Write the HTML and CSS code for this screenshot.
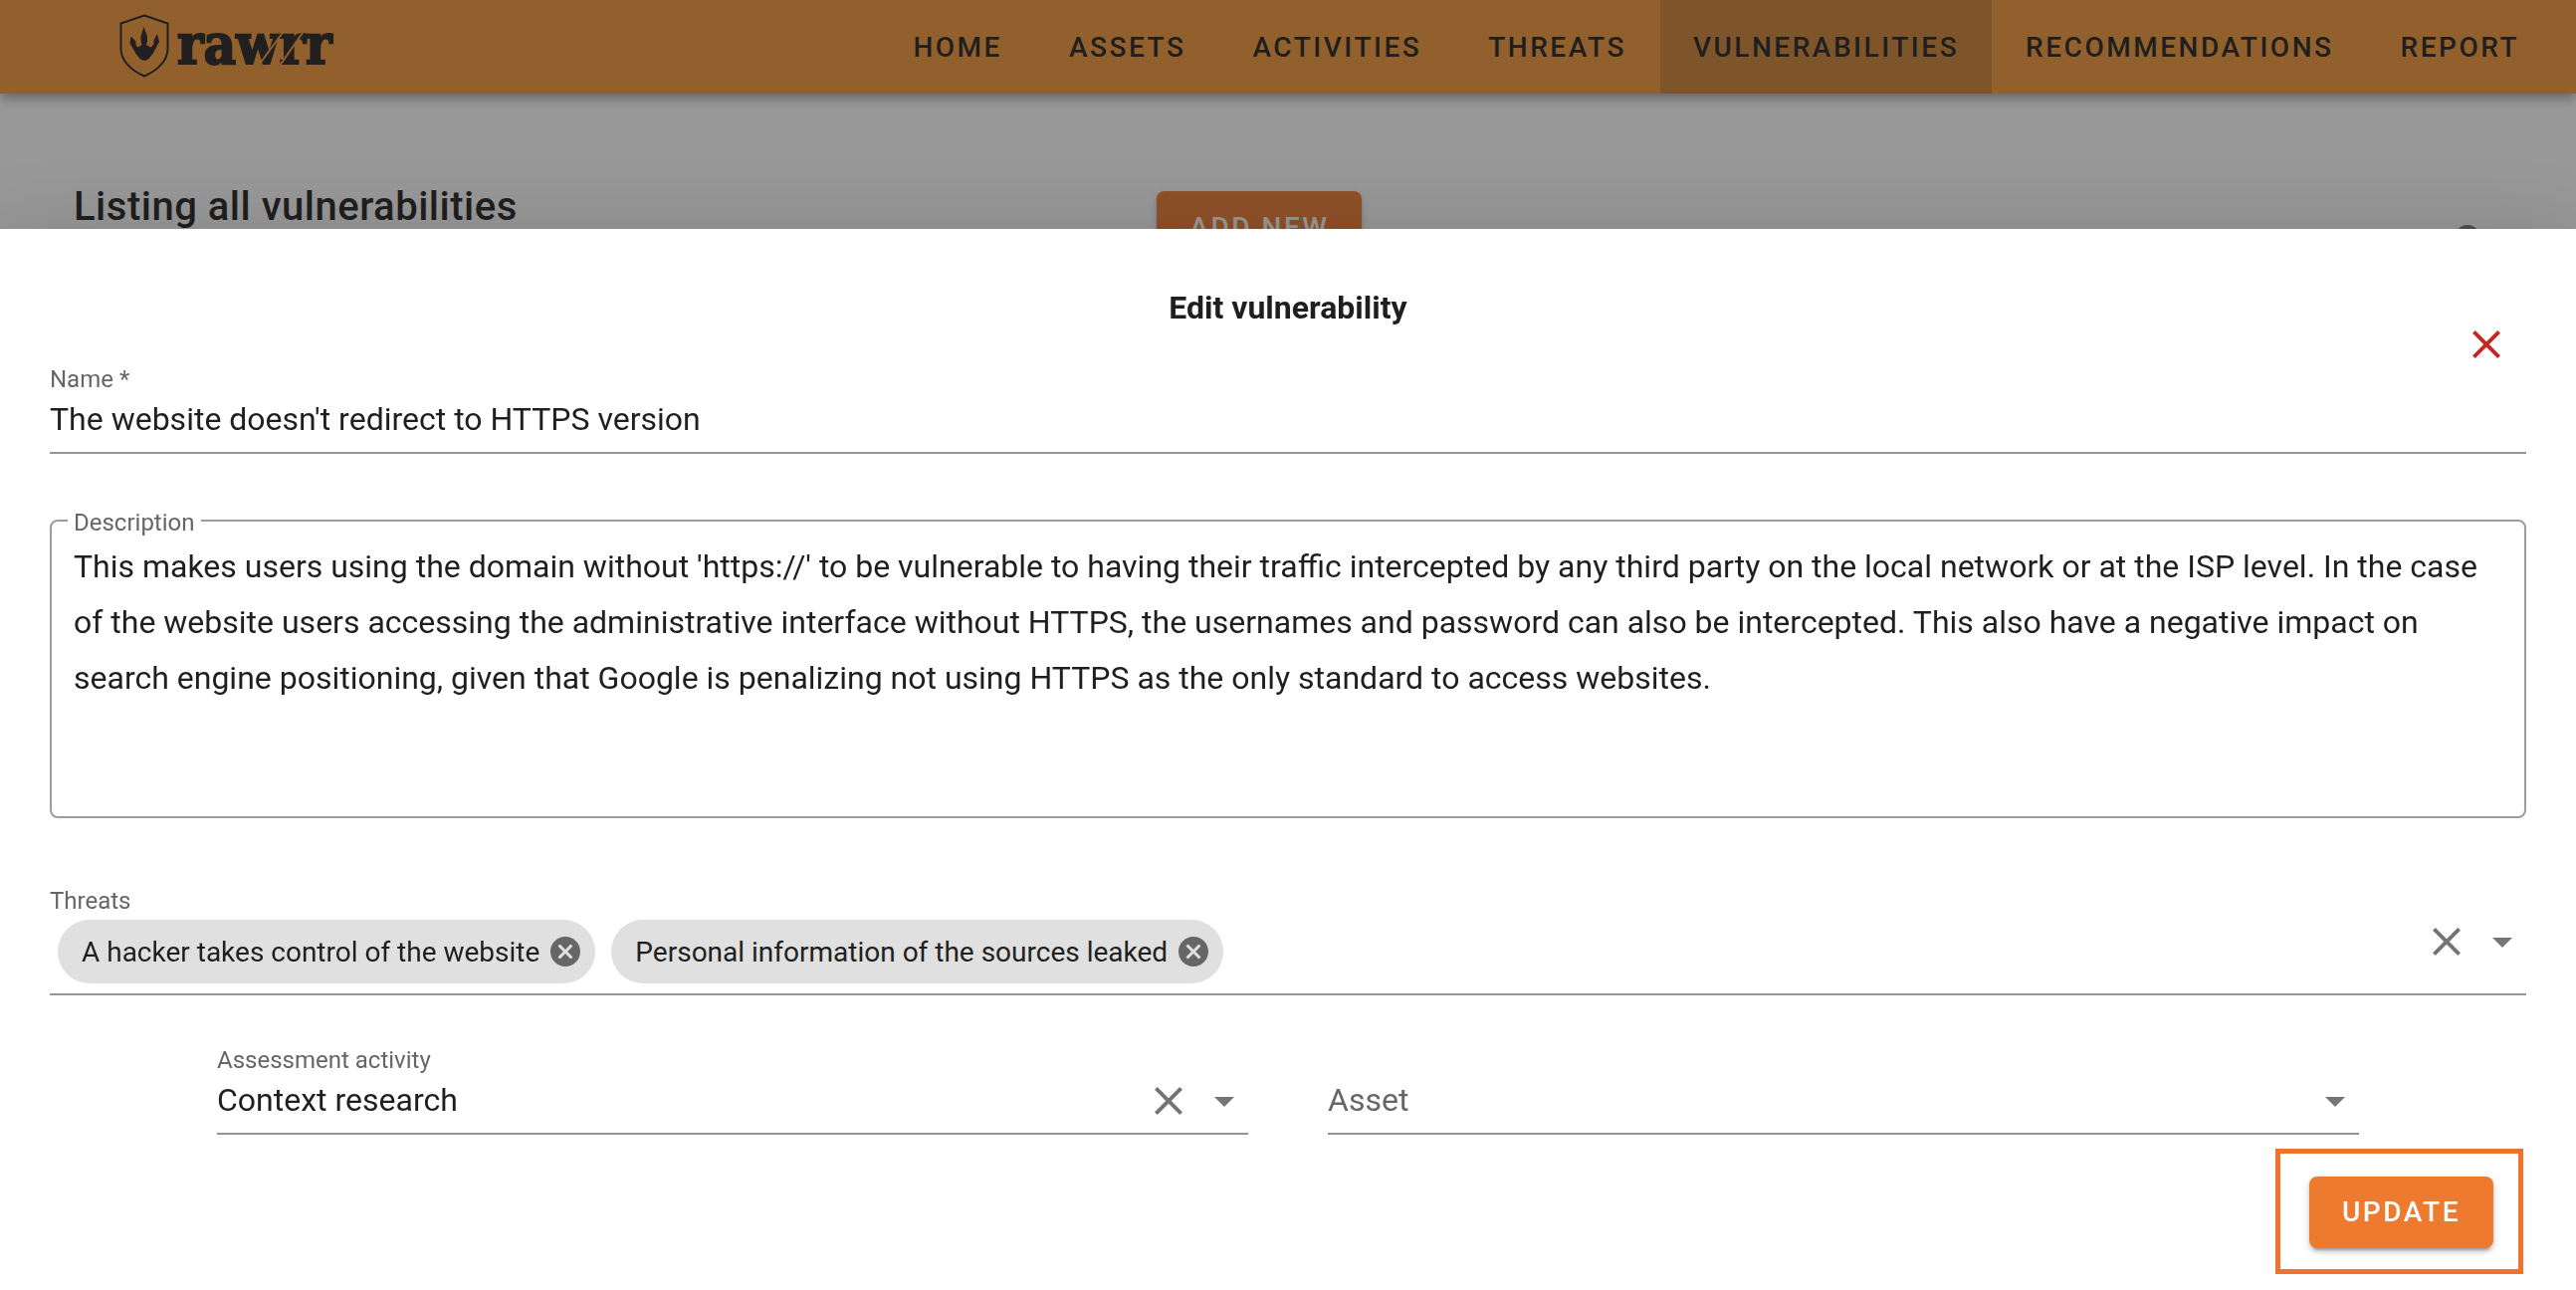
FILE: index.html
```html
<!DOCTYPE html>
<html lang="en">
<head>
<meta charset="utf-8">
<title>rawrr - Vulnerabilities</title>
<link rel="stylesheet" href="styles.css">
</head>
<body>
<header class="topbar">
  <a class="brand" href="#" aria-label="rawrr home">
    <svg class="brand-logo" width="216" height="68" viewBox="0 0 216 68">
      <path class="shield" d="M25 3.500L48.500 11.500V37C48.500 49 38 59 25 64.500C12 59 1.500 49 1.500 37V11.500Z"/>
      <path class="ink" d="M24.500 15L28 24.500V29.500L27 33.500L32 35.500L34.500 32V28.500L38 22L40 30L33.500 42L29 47.500Q25 50 21 47.500L16.500 42L10.500 31.500L11.500 24.500L16.500 29.500V33L18.500 35.500L22.500 33L21.500 29V24.500Z"/>
      <text class="ink wordmark" x="58" y="52">rawrr</text>
      <path class="cut" d="M141 52L166 18M161 54L186 18"/>
    </svg>
  </a>
  <nav class="nav">
    <a href="#">HOME</a>
    <a href="#">ASSETS</a>
    <a href="#">ACTIVITIES</a>
    <a href="#">THREATS</a>
    <a class="active" href="#" aria-current="page">VULNERABILITIES</a>
    <a href="#">RECOMMENDATIONS</a>
    <a href="#">REPORT</a>
  </nav>
</header>

<main class="listing">
  <h1>Listing all vulnerabilities</h1>
  <div><button class="btn" type="button">ADD NEW</button></div>
  <svg class="search" viewBox="0 0 24 24"><path d="M9.500 3A6.500 6.500 0 0 1 16 9.500C16 11.110 15.410 12.590 14.440 13.730L14.710 14H15.500L20.500 19L19 20.500L14 15.500V14.710L13.730 14.440C12.590 15.410 11.110 16 9.500 16A6.500 6.500 0 0 1 9.500 3M9.500 5C7 5 5 7 5 9.500C5 12 7 14 9.500 14C12 14 14 12 14 9.500C14 7 12 5 9.500 5Z"/></svg>
</main>

<div class="scrim"></div>

<section class="sheet" role="dialog" aria-labelledby="sheet-title">
  <h2 id="sheet-title">Edit vulnerability</h2>
  <button class="icon-btn close" type="button" aria-label="Close"><svg viewBox="0 0 24 24"><path d="M19 6.410L17.590 5L12 10.590L6.410 5L5 6.410L10.590 12L5 17.590L6.410 19L12 13.410L17.590 19L19 17.590L13.410 12Z"/></svg></button>
  <form>
    <div class="field">
      <label for="name">Name *</label>
      <input id="name" type="text" value="The website doesn't redirect to HTTPS version">
    </div>

    <fieldset class="outlined">
      <legend><label for="description">Description</label></legend>
      <textarea id="description">This makes users using the domain without 'https://' to be vulnerable to having their traffic intercepted by any third party on the local network or at the ISP level. In the case of the website users accessing the administrative interface without HTTPS, the usernames and password can also be intercepted. This also have a negative impact on search engine positioning, given that Google is penalizing not using HTTPS as the only standard to access websites.</textarea>
    </fieldset>

    <div class="field threats">
      <label for="threats">Threats</label>
      <div class="combo">
        <span class="chip">A hacker takes control of the website
          <button type="button" aria-label="Remove"><svg viewBox="0 0 24 24"><path d="M12 2C17.530 2 22 6.470 22 12C22 17.530 17.530 22 12 22C6.470 22 2 17.530 2 12C2 6.470 6.470 2 12 2M15.590 7L12 10.590L8.410 7L7 8.410L10.590 12L7 15.590L8.410 17L12 13.410L15.590 17L17 15.590L13.410 12L17 8.410Z"/></svg></button>
        </span>
        <span class="chip">Personal information of the sources leaked
          <button type="button" aria-label="Remove"><svg viewBox="0 0 24 24"><path d="M12 2C17.530 2 22 6.470 22 12C22 17.530 17.530 22 12 22C6.470 22 2 17.530 2 12C2 6.470 6.470 2 12 2M15.590 7L12 10.590L8.410 7L7 8.410L10.590 12L7 15.590L8.410 17L12 13.410L15.590 17L17 15.590L13.410 12L17 8.410Z"/></svg></button>
        </span>
        <input id="threats" type="text">
        <div class="tools">
          <button class="icon-btn" type="button" aria-label="Clear threats"><svg viewBox="0 0 24 24"><path d="M19 6.410L17.590 5L12 10.590L6.410 5L5 6.410L10.590 12L5 17.590L6.410 19L12 13.410L17.590 19L19 17.590L13.410 12Z"/></svg></button>
          <svg class="caret" viewBox="0 0 24 24"><path d="M7 10L12 15L17 10H7Z"/></svg>
        </div>
      </div>
    </div>

    <div class="pair">
      <div class="field">
        <label for="activity">Assessment activity</label>
        <div class="select-row">
          <select id="activity"><option>Context research</option></select>
          <div class="tools">
            <button class="icon-btn" type="button" aria-label="Clear activity"><svg viewBox="0 0 24 24"><path d="M19 6.410L17.590 5L12 10.590L6.410 5L5 6.410L10.590 12L5 17.590L6.410 19L12 13.410L17.590 19L19 17.590L13.410 12Z"/></svg></button>
            <svg class="caret" viewBox="0 0 24 24"><path d="M7 10L12 15L17 10H7Z"/></svg>
          </div>
        </div>
      </div>
      <div class="field empty">
        <div class="select-row">
          <select id="asset" aria-label="Asset"><option>Asset</option></select>
          <div class="tools"><svg class="caret" viewBox="0 0 24 24"><path d="M7 10L12 15L17 10H7Z"/></svg></div>
        </div>
      </div>
    </div>

    <div class="actions">
      <div class="highlight"><button class="btn" type="submit">UPDATE</button></div>
    </div>
  </form>
</section>
</body>
</html>
```
FILE: styles.css
```css
* { box-sizing: border-box; }

body {
  margin: 0;
  min-height: 100vh;
  overflow: hidden;
  background: #fff;
  color: #1f1f1f;
  font-family: Roboto, sans-serif;
  font-size: 32px;
}

button, input, select, textarea {
  margin: 0;
  padding: 0;
  border: 0;
  outline: 0;
  background: none;
  color: inherit;
  font: inherit;
}

svg { display: block; fill: currentColor; }

/* top bar */
.topbar {
  position: relative;
  display: flex;
  justify-content: space-between;
  height: 94px;
  padding: 0 24px 0 120px;
  background: #f29637;
  box-shadow: 0 4px 8px -2px rgba(0, 0, 0, .2), 0 8px 10px rgba(0, 0, 0, .14), 0 2px 20px rgba(0, 0, 0, .12);
}
.brand { padding-top: 12px; color: #231f20; }
.brand-logo { fill: none; }
.ink { fill: #231f20; }
.shield { stroke: #231f20; stroke-width: 2; }
.wordmark {
  font: bold 56px "DejaVu Serif Condensed", "DejaVu Serif", serif;
  stroke: #231f20;
  stroke-width: 2;
}
.cut { stroke: #f29637; stroke-width: 2; }
.nav { display: flex; gap: 1px; }
.nav a {
  display: flex;
  align-items: center;
  padding: 0 33px;
  color: #1f1f1f;
  font-size: 28px;
  font-weight: 500;
  letter-spacing: .09em;
  text-decoration: none;
}
.nav .active { background: #cd8032; }

/* page behind the sheet */
.listing {
  display: grid;
  grid-template-columns: 26fr 31fr 48px;
  align-items: start;
  padding: 98px 80px 0 74px;
}
.listing h1 { margin: -8px 0 0; font-size: 40px; line-height: 48px; font-weight: 500; letter-spacing: .0125em; }
.search { width: 48px; margin-top: 28px; color: #757575; }

.scrim { position: fixed; inset: 0; background: rgba(33, 33, 33, .46); }

.btn {
  height: 72px;
  padding: 0 33px;
  border-radius: 8px;
  background: #ee7a30;
  color: #fff;
  font-size: 28px;
  font-weight: 500;
  letter-spacing: .09em;
  box-shadow: 0 6px 2px -4px rgba(0, 0, 0, .2), 0 4px 4px rgba(0, 0, 0, .14), 0 2px 10px rgba(0, 0, 0, .12);
}

/* bottom sheet */
.sheet {
  position: fixed;
  left: 0;
  right: 0;
  bottom: 0;
  padding: 59px 50px 16px;
  background: #fff;
  box-shadow: 0 22px 30px -14px rgba(0, 0, 0, .2), 0 48px 76px 6px rgba(0, 0, 0, .14), 0 18px 92px 16px rgba(0, 0, 0, .12);
}
.sheet h2 { margin: 0 0 40px; font-size: 32px; line-height: 40px; font-weight: 700; text-align: center; }

.icon-btn { width: 48px; height: 48px; color: #757575; }
.close { position: absolute; top: 92px; right: 66px; color: #c62820; }

.field { padding-bottom: 5px; border-bottom: 2px solid #949494; }
.field label, .outlined legend { display: block; color: #666; font-size: 24px; line-height: 24px; }
.field > input { display: block; width: 100%; height: 56px; }

.outlined {
  min-width: 0;
  margin: 49px 0 71px;
  padding: 0 22px;
  border: 2px solid #9c9c9c;
  border-radius: 8px;
}
.outlined legend { margin-left: -6px; padding: 8px 6px 4px; }
.outlined textarea {
  display: block;
  width: 100%;
  height: 279px;
  line-height: 56px;
  resize: none;
  overflow: hidden;
}

.threats { padding-bottom: 10px; }
.combo { display: flex; gap: 16px; padding: 7px 0 0 8px; }
.combo input { flex: 1; min-width: 0; }
.chip {
  display: flex;
  align-items: center;
  gap: 8px;
  height: 64px;
  padding: 0 12px 0 24px;
  border-radius: 32px;
  background: #e0e0e0;
  font-size: 28px;
}
.chip button { width: 36px; height: 36px; color: #666; }

.tools { display: flex; align-items: center; gap: 8px; color: #757575; }
.combo .tools { align-self: flex-start; height: 44px; }
.caret { width: 48px; height: 48px; }

.pair {
  display: grid;
  grid-template-columns: 1fr 1fr;
  gap: 80px;
  align-items: end;
  margin-top: 53px;
  padding: 0 168px;
}
.select-row { display: flex; }
.select-row select { flex: 1; min-width: 0; height: 56px; appearance: none; }
.select-row .tools { padding-top: 2px; }
.empty select { color: #666; }

.actions { display: flex; justify-content: flex-end; margin-top: 14px; padding-right: 3px; }
.highlight { padding: 23px 25px 21px 29px; border: 5px solid #ee742d; line-height: 0; }
```
